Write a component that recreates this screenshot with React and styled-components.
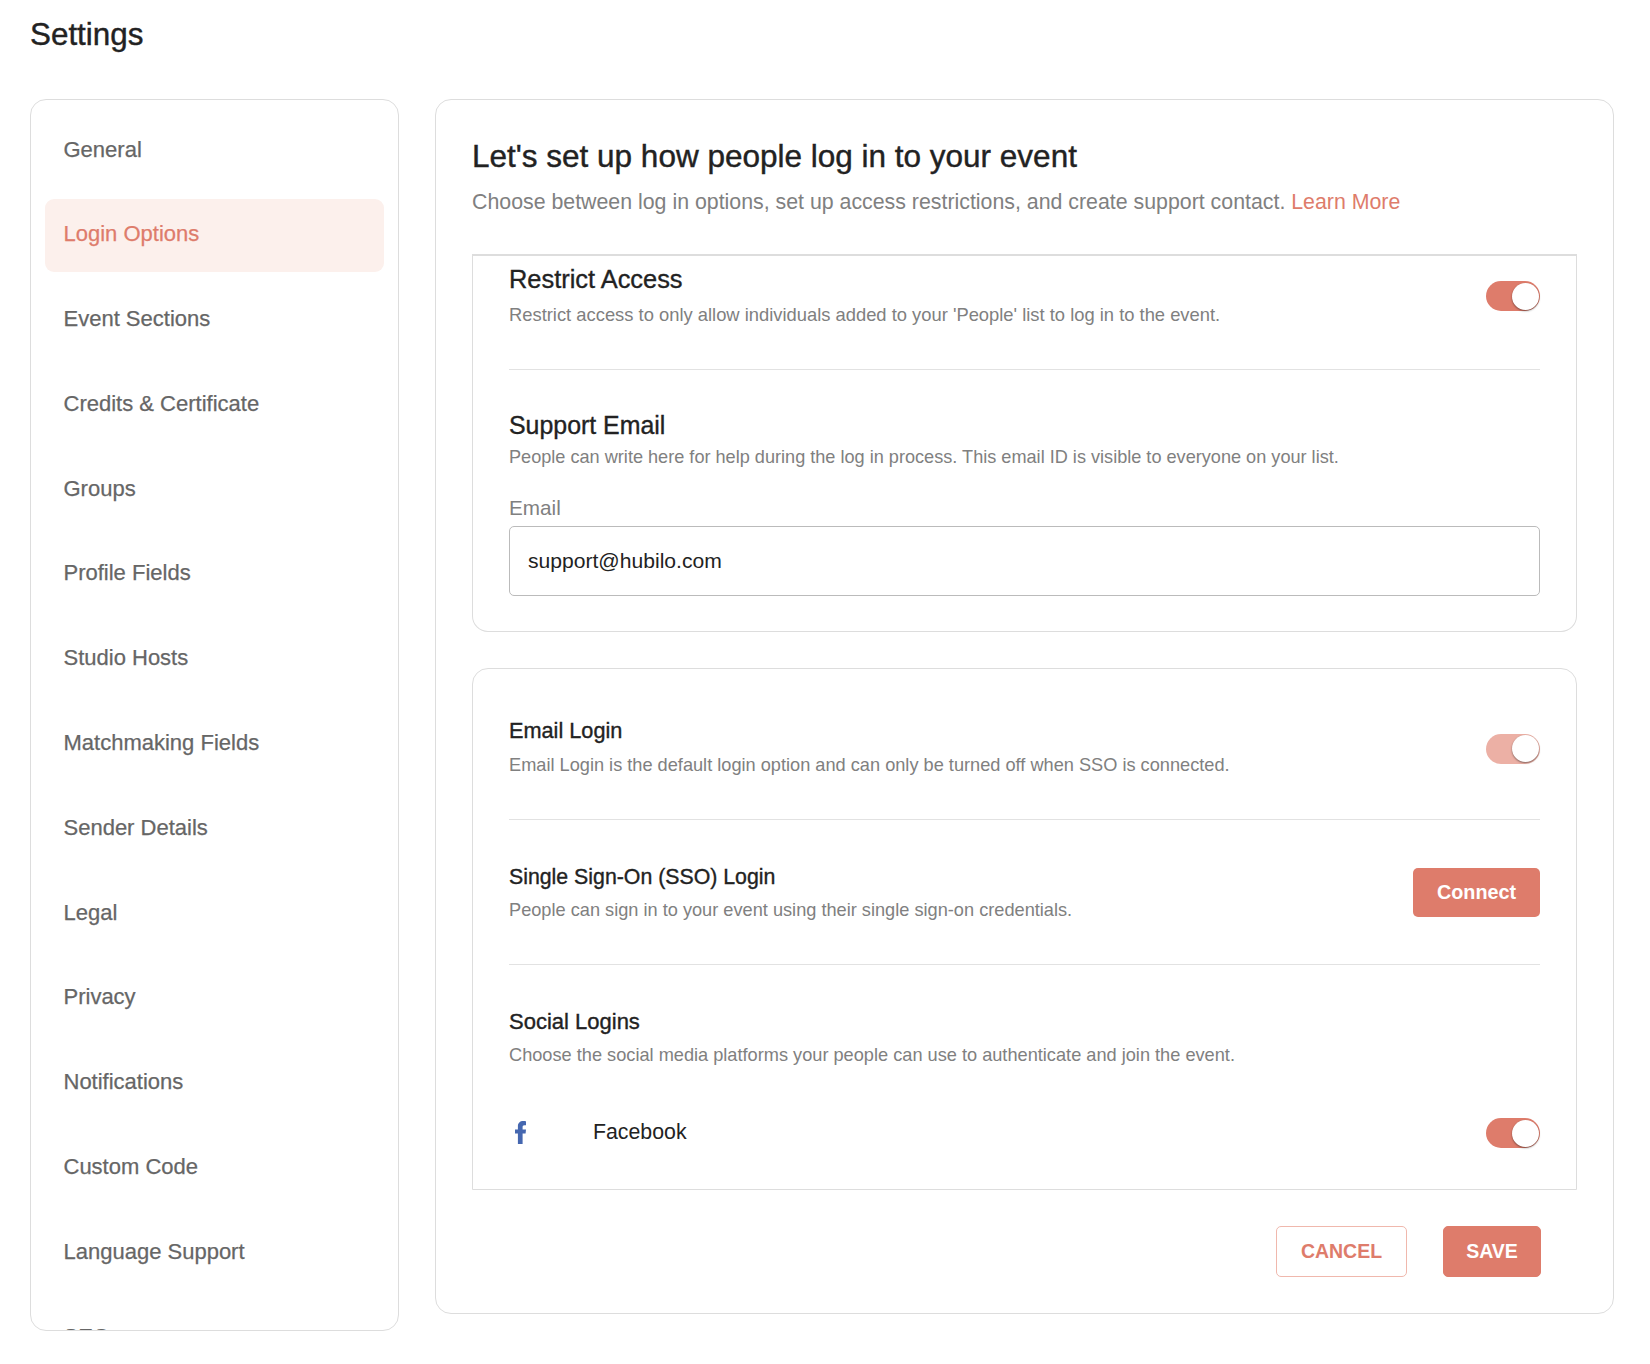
import React from 'react';
import styled, { createGlobalStyle } from 'styled-components';

const accent = '#de7c6b';

const GlobalStyle = createGlobalStyle`
  html, body {
    margin: 0;
    padding: 0;
    background: #fff;
  }
  body {
    font-family: "Liberation Sans", Arial, sans-serif;
    color: #222;
  }
  * {
    box-sizing: border-box;
  }
`;

const Page = styled.div`
  width: 1650px;
  height: 1364px;
  padding: 0 36px 33px 30px;
  overflow: hidden;
`;

const PageTitle = styled.h1`
  margin: 0;
  height: 99px;
  padding-top: 16px;
  font-size: 31.4px;
  line-height: 37px;
  font-weight: 400;
  -webkit-text-stroke: 0.4px #222;
  color: #222;
`;

const Columns = styled.div`
  display: flex;
  align-items: flex-start;
  gap: 36px;
`;

const Sidebar = styled.nav`
  flex: 0 0 369px;
  height: 1232px;
  border: 1px solid #ddd;
  border-radius: 16px;
  overflow: hidden;
  padding: 14px 14px 0;
  display: flex;
  flex-direction: column;
  gap: 11.8px;
`;

const NavItem = styled.a`
  flex: 0 0 73px;
  display: flex;
  align-items: center;
  padding: 0 0 2px 18.5px;
  border-radius: 9px;
  font-size: 22px;
  -webkit-text-stroke: 0.25px ${(p) => (p.$active ? accent : '#666')};
  color: ${(p) => (p.$active ? accent : '#666')};
  background: ${(p) => (p.$active ? '#fcf0ec' : 'transparent')};
`;

const Main = styled.main`
  flex: 1;
  height: 1215px;
  border: 1px solid #ddd;
  border-radius: 16px;
  padding: 36px 36px 0;
`;

const MainTitle = styled.h2`
  margin: 0;
  font-size: 31.5px;
  line-height: 40px;
  font-weight: 400;
  -webkit-text-stroke: 0.4px #222;
  color: #222;
`;

const MainSubtitle = styled.p`
  margin: 12px 0 38px;
  font-size: 21.33px;
  line-height: 28px;
  color: #808080;

  a {
    color: ${accent};
  }
`;

const TopCard = styled.section`
  border: 1px solid #ddd;
  border-top-width: 2px;
  border-radius: 0 0 16px 16px;
  padding: 0 36px;
  margin-bottom: 36px;
`;

const BottomCard = styled.section`
  border: 1px solid #ddd;
  border-radius: 16px 16px 0 0;
  padding: 0 36px;
`;

const Row = styled.div`
  display: flex;
  align-items: center;
  justify-content: space-between;
  padding: ${(p) => p.$pad || '43px 0 42px'};
  border-bottom: ${(p) => (p.$last ? 'none' : '1px solid #e2e2e2')};
`;

const RowText = styled.div`
  display: flex;
  flex-direction: column;
`;

const RowTitle = styled.h3`
  margin: 0 0 ${(p) => p.$gap || 8}px;
  font-size: ${(p) => p.$size || 21.7}px;
  line-height: ${(p) => p.$lh || 26}px;
  font-weight: 400;
  -webkit-text-stroke: 0.35px #222;
  color: #222;
`;

const RowDesc = styled.p`
  margin: 0;
  font-size: ${(p) => p.$size || 18.2}px;
  line-height: 24px;
  color: #808080;
`;

const Toggle = styled.span`
  flex: none;
  width: 54px;
  height: 30px;
  margin-top: ${(p) => (p.$nudge ? 2 : 0)}px;
  padding: 1px;
  border-radius: 15px;
  display: flex;
  justify-content: flex-end;
  align-items: center;
  background: ${(p) => (p.$disabled ? '#ecb0a5' : accent)};

  &::after {
    content: '';
    width: 27px;
    height: 27px;
    border-radius: 50%;
    background: #fff;
    box-shadow: 0 1px 2px rgba(0, 0, 0, 0.45);
  }
`;

const EmailSection = styled.div`
  padding: 41px 0 35px;
`;

const FieldLabel = styled.label`
  display: block;
  margin: 27px 0 6px;
  font-size: 20.7px;
  line-height: 24px;
  color: #808080;
`;

const Input = styled.input`
  display: block;
  width: 100%;
  height: 70px;
  padding: 0 18px;
  border: 1px solid #bbb;
  border-radius: 5px;
  font-family: inherit;
  font-size: 21.1px;
  color: #222;
  outline: none;
`;

const ConnectButton = styled.button`
  flex: none;
  width: 127px;
  height: 49px;
  margin-top: -1px;
  border: none;
  border-radius: 5px;
  background: ${accent};
  color: #fff;
  font-family: inherit;
  font-size: 19.8px;
  font-weight: 700;
`;

const SocialRow = styled.div`
  display: flex;
  align-items: center;
  margin-top: 51px;
  padding-bottom: 41px;
`;

const SocialIcon = styled.svg`
  flex: none;
  width: 11px;
  height: 23px;
  margin: 0 67px 2px 6px;
  fill: #4567b0;
`;

const SocialName = styled.span`
  flex: 1;
  padding-bottom: 2px;
  font-size: 21.3px;
  color: #222;
`;

const Footer = styled.div`
  display: flex;
  justify-content: flex-end;
  gap: 36px;
  margin-top: 36px;
  padding-right: 36px;
`;

const FooterButton = styled.button`
  height: 51px;
  width: ${(p) => (p.$primary ? 98 : 131)}px;
  border: 1px solid ${(p) => (p.$primary ? accent : '#f0b8ad')};
  border-radius: 5px;
  background: ${(p) => (p.$primary ? accent : '#fff')};
  color: ${(p) => (p.$primary ? '#fff' : accent)};
  font-family: inherit;
  font-size: 19.5px;
  font-weight: 700;
`;

const navItems = [
  'General',
  'Login Options',
  'Event Sections',
  'Credits & Certificate',
  'Groups',
  'Profile Fields',
  'Studio Hosts',
  'Matchmaking Fields',
  'Sender Details',
  'Legal',
  'Privacy',
  'Notifications',
  'Custom Code',
  'Language Support',
  'SEO',
];

const App = () => (
  <>
    <GlobalStyle />
    <Page>
      <PageTitle>Settings</PageTitle>
      <Columns>
        <Sidebar>
          {navItems.map((item) => (
            <NavItem key={item} $active={item === 'Login Options'}>
              {item}
            </NavItem>
          ))}
        </Sidebar>

        <Main>
          <MainTitle>Let's set up how people log in to your event</MainTitle>
          <MainSubtitle>
            Choose between log in options, set up access restrictions, and create support contact.{' '}
            <a>Learn More</a>
          </MainSubtitle>

          <TopCard>
            <Row $pad="9px 0 42px">
              <RowText>
                <RowTitle $size={25.4} $lh={28} $gap={10}>Restrict Access</RowTitle>
                <RowDesc $size={18.37}>
                  Restrict access to only allow individuals added to your 'People' list to log in to the event.
                </RowDesc>
              </RowText>
              <Toggle />
            </Row>
            <EmailSection>
              <RowTitle $size={24.9} $lh={28} $gap={6}>Support Email</RowTitle>
              <RowDesc $size={18.14}>
                People can write here for help during the log in process. This email ID is visible to everyone on your list.
              </RowDesc>
              <FieldLabel>Email</FieldLabel>
              <Input readOnly value="support@hubilo.com" />
            </EmailSection>
          </TopCard>

          <BottomCard>
            <Row $pad="49px 0 42px">
              <RowText>
                <RowTitle $gap={9}>Email Login</RowTitle>
                <RowDesc>
                  Email Login is the default login option and can only be turned off when SSO is connected.
                </RowDesc>
              </RowText>
              <Toggle $disabled $nudge />
            </Row>
            <Row $pad="44px 0 42px">
              <RowText>
                <RowTitle $size={21.3}>Single Sign-On (SSO) Login</RowTitle>
                <RowDesc>People can sign in to your event using their single sign-on credentials.</RowDesc>
              </RowText>
              <ConnectButton>Connect</ConnectButton>
            </Row>
            <Row $last $pad="44px 0 0">
              <RowText>
                <RowTitle $size={22}>Social Logins</RowTitle>
                <RowDesc>
                  Choose the social media platforms your people can use to authenticate and join the event.
                </RowDesc>
              </RowText>
            </Row>
            <SocialRow>
              <SocialIcon viewBox="0 0 11 23">
                <path d="M7.6 23V12.6h3l.4-4H7.6V6.1c0-1.1.3-1.9 1.9-1.9H11V.4C10.7.3 9.6.1 8.2.1 5 .1 2.9 2 2.9 5.4v3.2H0v4h2.9V23z" />
              </SocialIcon>
              <SocialName>Facebook</SocialName>
              <Toggle />
            </SocialRow>
          </BottomCard>

          <Footer>
            <FooterButton>CANCEL</FooterButton>
            <FooterButton $primary>SAVE</FooterButton>
          </Footer>
        </Main>
      </Columns>
    </Page>
  </>
);

export default App;
